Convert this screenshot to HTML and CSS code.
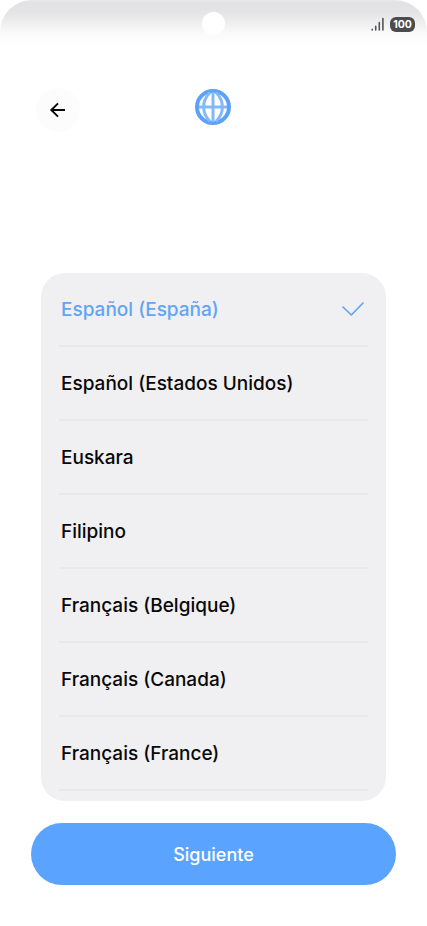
FILE: index.html
```html
<!DOCTYPE html>
<html lang="es">
<head>
<meta charset="utf-8">
<title>Idioma</title>
<link rel="stylesheet" href="styles.css">
</head>
<body>
<main class="screen">
  <header class="status">
    <span class="camera"></span>
    <svg class="signal" width="14" height="15" viewBox="0 0 14 15" stroke="#555557" stroke-width="1.6" stroke-linecap="round"><path d="M1.2 12.2V13M4.7 9.3V13M8.3 5.5V13M11.9 1.5V13"/></svg>
    <span class="battery">100</span>
  </header>
  <nav class="top">
    <button class="back" aria-label="Atrás"><svg width="18" height="18" viewBox="0 0 18 18" fill="none" stroke="#080808" stroke-width="1.9"><path d="M16 9H2.8M9 2.3L2.3 9L9 15.7"/></svg></button>
    <svg class="globe" width="38" height="38" viewBox="0 0 38 38" fill="none"><circle cx="19" cy="19" r="16" stroke="#5ba2f8" stroke-width="4"/><path d="M5 19H33" stroke="#83b9fb" stroke-width="3"/><path d="M19 4V34M16 4.5C7.5 13 7.5 25 16 33.5M22 4.5C30.5 13 30.5 25 22 33.5" stroke="#83b9fb" stroke-width="3"/></svg>
  </nav>
  <ul class="list">
    <li class="row selected"><span class="t1">Español (España)</span><svg width="24" height="16" viewBox="0 0 24 16" fill="none" stroke="#62a5f4" stroke-width="1.7" stroke-linecap="round" stroke-linejoin="round"><path d="M2 6L10.3 14L22 2"/></svg></li>
    <li class="row"><span class="t2">Español (Estados Unidos)</span></li>
    <li class="row"><span class="t3">Euskara</span></li>
    <li class="row"><span class="t4">Filipino</span></li>
    <li class="row"><span class="t5">Français (Belgique)</span></li>
    <li class="row"><span class="t6">Français (Canada)</span></li>
    <li class="row"><span class="t7">Français (France)</span></li>
  </ul>
  <button class="next">Siguiente</button>
</main>
</body>
</html>
```
FILE: styles.css
```css
* { box-sizing: border-box; }
body { margin: 0; background: #fff; font-family: Inter, "Noto Sans", sans-serif; }
button { border: 0; padding: 0; font-family: inherit; }
.screen { width: 427px; height: 926px; overflow: hidden; display: flex; flex-direction: column; }
.status { position: relative; height: 48px; border-radius: 32px 32px 0 0; background: linear-gradient(#e9e9eb 0, #e2e2e4 3px, #e4e4e6 12px, #f0f0f1 24px, #fafafa 34px, #fff 46px); display: flex; justify-content: flex-end; align-items: center; gap: 5px; padding-right: 12px; }
.camera { position: absolute; left: 202px; top: 12px; width: 23px; height: 23px; border-radius: 50%; background: #fff; }
.battery { width: 25px; height: 15px; border-radius: 6px; background: #4c4c4e; color: #fff; font-size: 10.5px; font-weight: 700; line-height: 15px; text-align: center; }
.top { height: 225px; padding: 40px 0 0 36px; display: flex; align-items: flex-start; }
.back { width: 44px; height: 44px; border-radius: 50%; background: #fcfcfc; display: flex; align-items: center; justify-content: center; }
.globe { margin-left: 114px; }
.list { list-style: none; margin: 0 41px; padding: 0 18px; width: 345px; height: 528px; flex: none; border-radius: 24px; background: #f0f0f2; }
.row { height: 74px; padding: 0 3px 0 2px; border-bottom: 2px solid #e8e8ea; display: flex; align-items: center; justify-content: space-between; font-size: 19px; font-weight: 500; color: #080808; white-space: nowrap; }
.selected { color: #62a5f4; }
.next { width: 365px; height: 62px; margin: 22px 0 0 31px; border-radius: 31px; background: #5aa3ff; color: #fff; font-size: 18px; font-weight: 500; }
```
